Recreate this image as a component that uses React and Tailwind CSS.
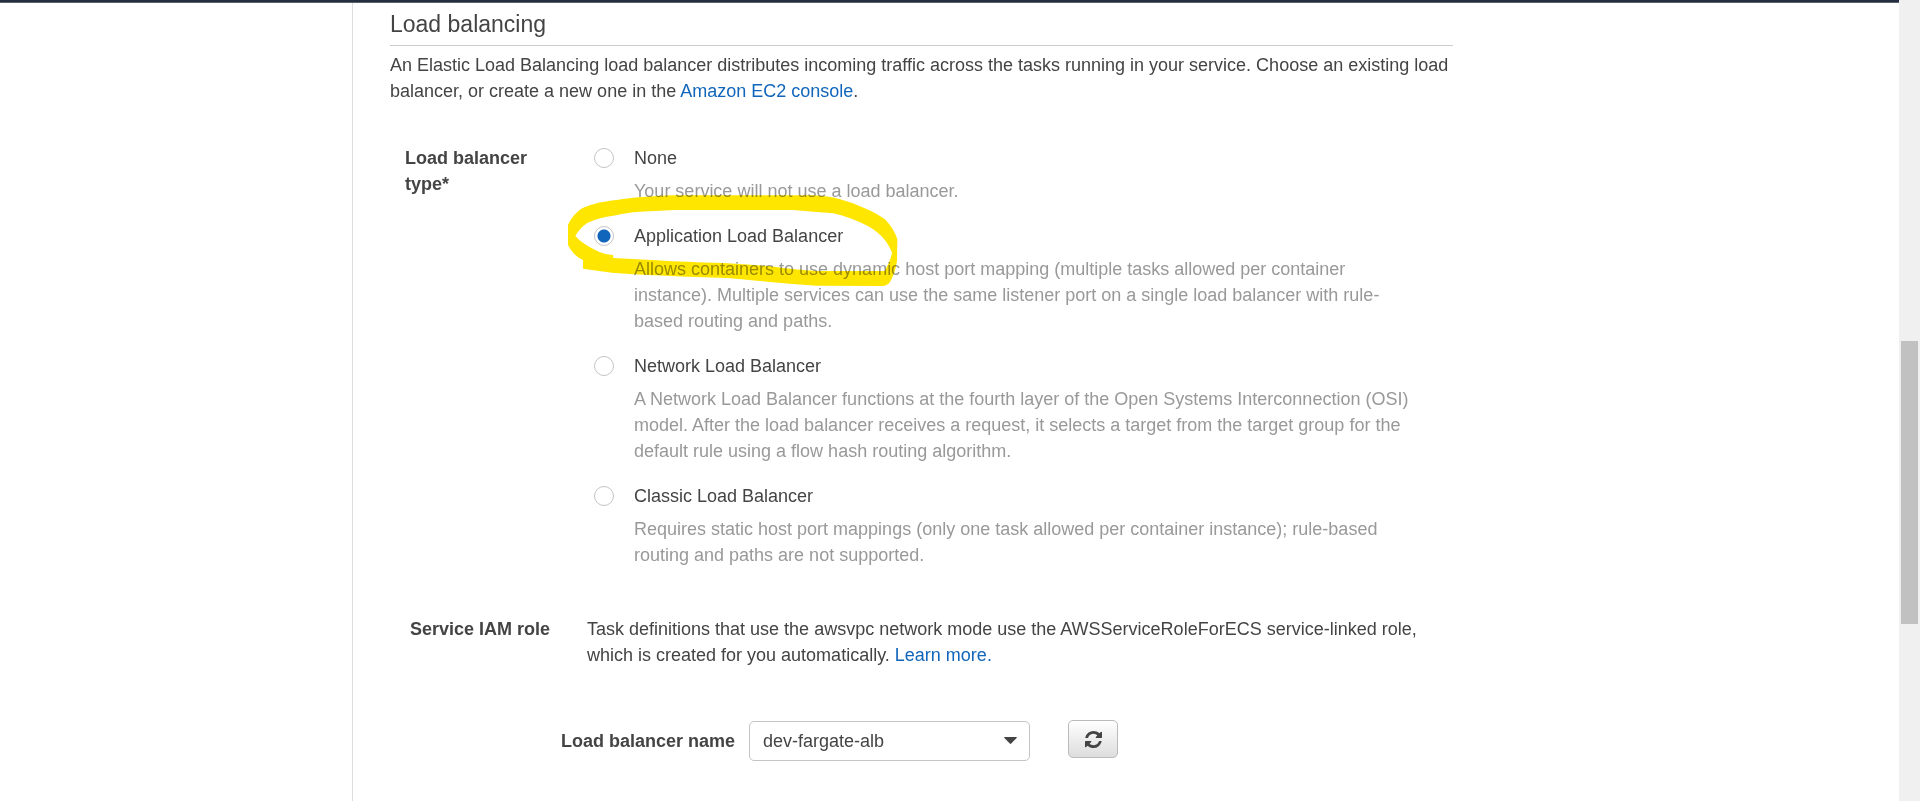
import { useState } from "react";

const OPTIONS = [
  {
    id: "none",
    label: "None",
    description: "Your service will not use a load balancer.",
  },
  {
    id: "application",
    label: "Application Load Balancer",
    description:
      "Allows containers to use dynamic host port mapping (multiple tasks allowed per container instance). Multiple services can use the same listener port on a single load balancer with rule-based routing and paths.",
  },
  {
    id: "network",
    label: "Network Load Balancer",
    description:
      "A Network Load Balancer functions at the fourth layer of the Open Systems Interconnection (OSI) model. After the load balancer receives a request, it selects a target from the target group for the default rule using a flow hash routing algorithm.",
  },
  {
    id: "classic",
    label: "Classic Load Balancer",
    description:
      "Requires static host port mappings (only one task allowed per container instance); rule-based routing and paths are not supported.",
  },
];

// Hand-drawn marker loop around the recommended option.
function MarkerLoop() {
  return (
    <svg
      className="pointer-events-none absolute -top-[15px] -left-[44px] h-[200px] w-[400px] mix-blend-multiply"
      viewBox="0 0 1200 600"
      aria-hidden="true"
    >
      <path
        fill="#ffe600"
        fillRule="evenodd"
        d="M54 285C62 266 78 246 98 234C128 221 160 214 200 210C250 203 300 198 370 196L790 196C820 198 845 201 868 207C920 222 970 243 1005 268C1024 288 1036 308 1042 328L1041 392C1037 420 1029 440 1020 456C1014 464 1008 467 1000 468L800 467C740 463 680 458 620 452C560 445 500 442 440 441C360 438 270 434 185 428L99 416L99 390C80 381 64 366 54 345ZM76 318C84 304 96 289 112 279C138 266 164 261 190 257C230 248 270 244 315 243L375 240L730 240C770 244 810 247 850 250C885 258 920 271 955 289C975 301 992 314 1002 327C1014 342 1021 354 1026 368C1023 386 1014 405 1004 423L800 423C770 421 740 419 700 414C640 406 580 402 520 399C450 397 380 395 320 391L190 384L189 375C170 374 152 369 136 360C116 350 100 340 88 330Z"
      />
    </svg>
  );
}

function RefreshIcon() {
  return (
    <svg className="size-[17px]" viewBox="0 0 1536 1536" fill="currentColor" aria-hidden="true">
      <path d="M1511 928q0 5-1 7-64 268-268 434.500t-478 166.500q-146 0-282.500-55t-243.500-157l-129 129q-19 19-45 19t-45-19-19-45v-448q0-26 19-45t45-19h448q26 0 45 19t19 45-19 45l-137 137q71 66 161 102t187 36q134 0 250-65t186-179q11-17 53-117 8-23 30-23h192q13 0 22.500 9.500t9.500 22.500zm25-800v448q0 26-19 45t-45 19h-448q-26 0-45-19t-19-45 19-45l138-138q-148-137-349-137-134 0-250 65t-186 179q-11 17-53 117-8 23-30 23h-199q-13 0-22.500-9.500t-9.500-22.500v-7q65-268 270-434.500t480-166.500q146 0 284 55.500t245 156.500l130-129q19-19 45-19t45 19 19 45z" />
    </svg>
  );
}

function Option({ option, checked, onChange }) {
  return (
    <div className="flex gap-5">
      <input
        type="radio"
        name="lb-type"
        id={option.id}
        checked={checked}
        onChange={() => onChange(option.id)}
        className="mt-[3px] size-5 shrink-0 appearance-none rounded-full border border-[#c4c4c4] bg-white checked:bg-[radial-gradient(circle,#1166bb_6px,white_7px)]"
      />
      <div>
        <label htmlFor={option.id} className="block">
          {option.label}
        </label>
        <p className="mt-[7px] text-[#999]">{option.description}</p>
      </div>
    </div>
  );
}

export default function App() {
  const [type, setType] = useState("application");
  return (
    <div className="flex min-h-screen bg-white font-['Liberation_Sans',Arial,sans-serif] text-[18px] leading-[26px] text-[#444]">
      <div className="flex flex-1 flex-col">
        <header className="h-[3px] border-b border-[#59626d] bg-[#232f3e]" />
        <div className="flex flex-1">
          <aside className="w-[353px] shrink-0 border-r border-[#ddd]" />
          <main className="w-full max-w-[1100px] pl-[37px]">
            <h2 className="border-b border-[#ccc] pt-[6px] pb-[6px] text-[23px] leading-[30px]">
              Load balancing
            </h2>
            <p className="mt-[6px]">
              An Elastic Load Balancing load balancer distributes incoming traffic across the tasks
              running in your service. Choose an existing load balancer, or create a new one in the{" "}
              <a href="#ec2" className="text-[#1166bb]">
                Amazon EC2 console
              </a>
              .
            </p>

            <fieldset
              aria-labelledby="lb-type-title"
              className="mt-[41px] flex pr-[38px] pl-[15px]"
            >
              <div id="lb-type-title" className="w-[189px] shrink-0 pr-12 font-bold">
                Load balancer type*
              </div>
              <div className="relative flex flex-col gap-[19px]">
                {OPTIONS.map((option) => (
                  <Option
                    key={option.id}
                    option={option}
                    checked={type === option.id}
                    onChange={setType}
                  />
                ))}
                <MarkerLoop />
              </div>
            </fieldset>

            <section className="mt-12 flex pr-[33px] pl-5">
              <h3 className="w-[177px] shrink-0 font-bold">Service IAM role</h3>
              <p>
                Task definitions that use the awsvpc network mode use the AWSServiceRoleForECS
                service-linked role, which is created for you automatically.{" "}
                <a href="#learn-more" className="text-[#1166bb]">
                  Learn more.
                </a>
              </p>
            </section>

            <div className="mt-[52px] flex items-start pl-[171px]">
              <label htmlFor="lb-name" className="pt-2 font-bold">
                Load balancer name
              </label>
              <div className="relative mt-px ml-[14px] w-[281px]">
                <select
                  id="lb-name"
                  className="block h-10 w-full appearance-none rounded-[5px] border border-[#c4c4c4] bg-white px-[13px]"
                >
                  <option>dev-fargate-alb</option>
                </select>
                <svg
                  className="pointer-events-none absolute top-4 right-[13px] h-[7px] w-[13px]"
                  viewBox="0 0 13 7"
                  fill="currentColor"
                  aria-hidden="true"
                >
                  <path d="M0.600 0H12.400Q13.200 0.300 12.600 1L7.200 6.600Q6.500 7.200 5.800 6.600L0.400 1Q-0.200 0.300 0.600 0Z" />
                </svg>
              </div>
              <button
                type="button"
                aria-label="Refresh"
                className="ml-[38px] flex h-[38px] w-[50px] items-center justify-center rounded-[5px] border border-[#bbb] bg-linear-to-b from-white to-[#ddd]"
              >
                <RefreshIcon />
              </button>
            </div>
          </main>
        </div>
      </div>
      <div className="w-[21px] shrink-0 bg-[#f0f0f0] px-[2px] pt-[341px]" aria-hidden="true">
        <div className="h-[283px] w-[17px] bg-[#c1c1c1]" />
      </div>
    </div>
  );
}
